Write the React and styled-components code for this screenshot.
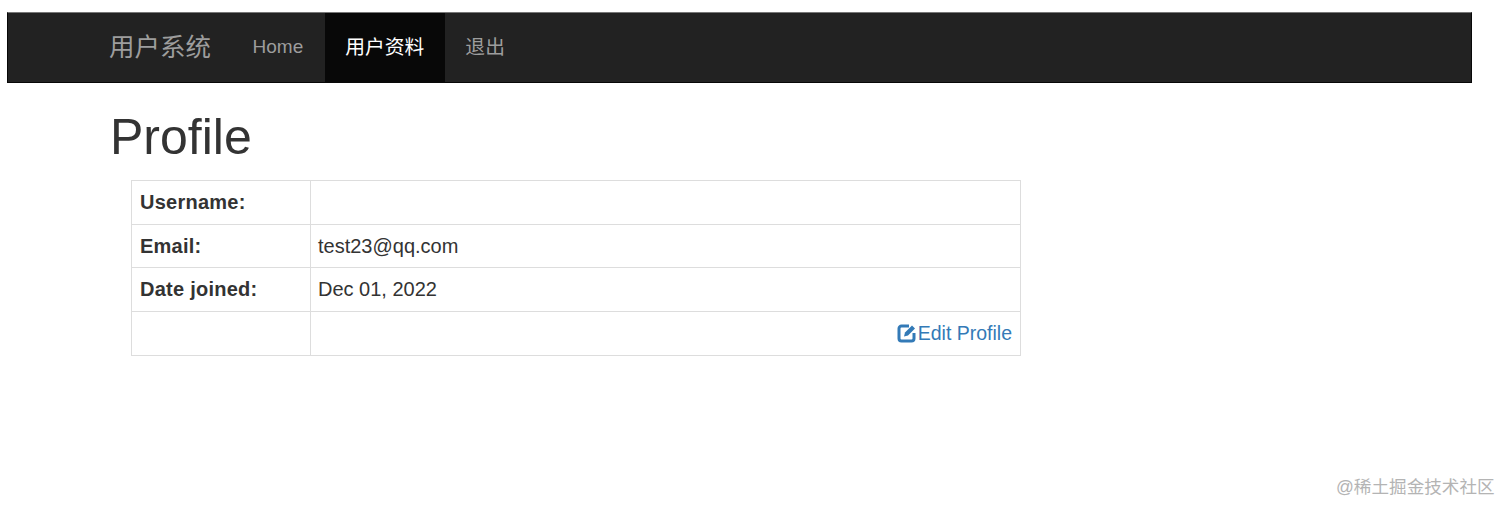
import React from "react";
import styled, { createGlobalStyle } from "styled-components";

const Global = createGlobalStyle`
  html, body { margin: 0; padding: 0; background: #fff; height: 514px; overflow: hidden; }
  body { font-family: "Liberation Sans", "Noto Sans CJK SC", sans-serif; color: #333; }
`;
const Page = styled.div`
  padding: 12px 40px 0 7px;
  width: 1465px;
`;
const Navbar = styled.nav`
  height: 69px;
  background: #222;
  border: 1px solid #080808;
  border-top-color: #777;
  display: flex;
  align-items: stretch;
  padding-left: 101px;
`;
const Brand = styled.a`
  font-size: 25.5px;
  color: #9d9d9d;
  display: flex;
  align-items: center;
  padding-right: 21px;
  padding-bottom: 7px;
`;
const NavItem = styled.a`
  font-size: ${p => (p.$latin ? "19px" : "19.8px")};
  color: ${p => (p.$active ? "#fff" : "#9d9d9d")};
  background: ${p => (p.$active ? "#080808" : "transparent")};
  display: flex;
  align-items: center;
  padding: 0 ${p => (p.$latin ? "21.500px" : "20.500px")} ${p => (p.$latin ? "2px" : "5px")} 20.500px;
`;
const Content = styled.main`
  padding-left: 103px;
`;
const Title = styled.h1`
  margin: 21px 0 10px;
  font-size: 50px;
  font-weight: 400;
  line-height: 66px;
  color: #333;
`;
const Table = styled.table`
  margin-left: 21px;
  width: 890px;
  border-collapse: collapse;
  table-layout: fixed;
  font-size: 20px;
`;
const Cell = styled.td`
  border: 1px solid #ddd;
  height: 43.7px;
  box-sizing: border-box;
  padding: 0 8px 0 ${p => (p.$head ? "8px" : "7px")};
  text-align: ${p => (p.$right ? "right" : "left")};
  font-weight: ${p => (p.$head ? 700 : 400)};
  letter-spacing: ${p => (p.$head ? "0.25px" : "0")};
  width: ${p => (p.$head ? "179px" : "auto")};
  color: #333;
`;
const EditLink = styled.a`
  display: inline-flex;
  align-items: center;
  justify-content: flex-end;
  color: #337ab7;
  font-size: 19.5px;
  padding-top: 3px;
`;
const Watermark = styled.div`
  position: absolute;
  left: 1336px;
  top: 476px;
  font-size: 17.6px;
  line-height: 22px;
  color: #b4b4b4;
  white-space: nowrap;
`;

const EditIcon = () => (
  <svg width="21" height="20" viewBox="0 0 21 20" fill="none">
    <path d="M12 3H4.500A2.500 2.500 0 0 0 2 5.500v10A2.500 2.500 0 0 0 4.500 18h10a2.500 2.500 0 0 0 2.500-2.500V10" stroke="#337ab7" strokeWidth="3" />
    <path d="M7 13.500l1-4 7-7 3 3-7 7z" fill="#337ab7" />
  </svg>
);

const rows = [
  ["Username:", ""],
  ["Email:", "test23@qq.com"],
  ["Date joined:", "Dec 01, 2022"],
];

export default function App() {
  return (
    <>
      <Global />
      <Page>
        <Navbar>
          <Brand>用户系统</Brand>
          <NavItem $latin>Home</NavItem>
          <NavItem $active>用户资料</NavItem>
          <NavItem>退出</NavItem>
        </Navbar>
        <Content>
          <Title>Profile</Title>
          <Table>
            <tbody>
              {rows.map(([k, v]) => (
                <tr key={k}>
                  <Cell $head>{k}</Cell>
                  <Cell>{v}</Cell>
                </tr>
              ))}
              <tr>
                <Cell $head />
                <Cell $right>
                  <EditLink><EditIcon />Edit Profile</EditLink>
                </Cell>
              </tr>
            </tbody>
          </Table>
        </Content>
      </Page>
      <Watermark>@稀土掘金技术社区</Watermark>
    </>
  );
}
